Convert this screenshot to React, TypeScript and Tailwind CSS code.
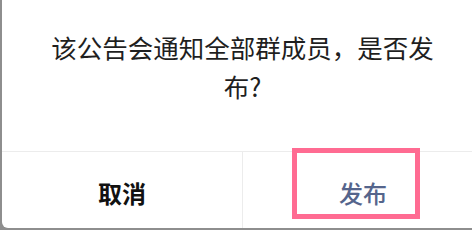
export default function App() {
  const font = { fontFamily: '"Noto Sans CJK SC", "Noto Sans", sans-serif' }
  return (
    <div className="h-[230px] w-[472px] overflow-hidden bg-[#8e8e8e]" style={font}>
      <div className="ml-[2px] flex h-[228px] w-[481px] flex-col rounded-bl-[6px] bg-white">
        {/* Message */}
        <div className="flex h-[151px] items-start justify-center px-[46px] pt-[27px]">
          <p className="text-center text-[25.5px] leading-[39px] text-[#1f1f1f]">
            该公告会通知全部群成员，是否发布?
          </p>
        </div>

        {/* Actions */}
        <div className="flex flex-1 border-t border-[#ececec]">
          <button className="flex flex-1 items-center justify-center pt-[6px] text-[24px] font-semibold text-[#111]">
            取消
          </button>
          <div className="w-px bg-[#ececec]" />
          <div className="relative flex flex-1 items-center justify-center pt-[6px]">
            <button className="text-[24px] font-medium text-[#55658c]">发布</button>
            <div className="pointer-events-none absolute left-[49px] top-[-4px] h-[71px] w-[128px] border-[5px] border-[#ff6b92]" />
          </div>
        </div>
      </div>
    </div>
  )
}
